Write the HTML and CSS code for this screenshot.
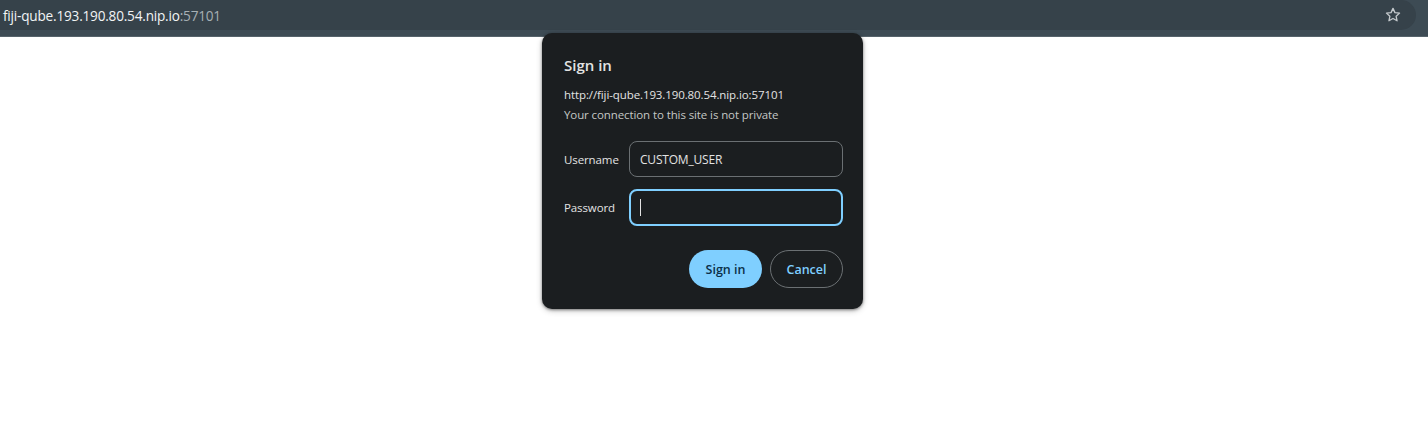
FILE: index.html
```html
<!DOCTYPE html>
<html>
<head>
<meta charset="utf-8">
<link rel="stylesheet" href="styles.css">
</head>
<body>
<div class="toolbar">
  <div class="omnibox">
    <span class="host">fiji-qube.193.190.80.54.nip.io</span><span class="port">:57101</span>
    <svg class="star" width="18" height="18" viewBox="0 0 24 24"><path d="M12 3.2l2.6 5.6 6.1.7-4.5 4.2 1.2 6-5.4-3-5.4 3 1.2-6-4.5-4.2 6.1-.7z" fill="none" stroke="#c4c9cc" stroke-width="1.8" stroke-linejoin="round"/></svg>
  </div>
</div>
<div class="page"></div>
<div class="dialog">
  <div class="title">Sign in</div>
  <div class="info">http://fiji-qube.193.190.80.54.nip.io:57101</div>
  <div class="info sub">Your connection to this site is not private</div>
  <div class="form">
    <div class="row">
      <label>Username</label>
      <div class="field">CUSTOM_USER</div>
    </div>
    <div class="row">
      <label>Password</label>
      <div class="field focus"><span class="caret"></span></div>
    </div>
  </div>
  <div class="actions">
    <button class="btn primary">Sign in</button>
    <button class="btn secondary">Cancel</button>
  </div>
</div>
</body>
</html>
```
FILE: styles.css
```css
* { box-sizing: border-box; }
html, body { margin: 0; padding: 0; background: #ffffff; }
body { font-family: "Open Sans", "Noto Sans", sans-serif; position: relative; height: 440px; overflow: hidden; }
.toolbar {
  height: 37px;
  background: #3d4b54;
  padding-right: 12px;
  border-bottom: 1px solid #56636b;
}
.omnibox {
  height: 30px;
  background: #36424a;
  border-radius: 0 15px 15px 0;
  display: flex;
  align-items: center;
  padding-left: 3px;
  font-size: 13.6px;
  letter-spacing: -0.2px;
}
.host { color: #f2f4f5; }
.port { color: #a7b0b5; }
.star { margin-left: auto; margin-right: 14px; }
.dialog {
  position: absolute;
  left: 542px;
  top: 33px;
  width: 321px;
  height: 276px;
  background: #1b1e20;
  border-radius: 10px;
  box-shadow: 0 1px 3px rgba(0,0,0,0.45), 0 2px 6px rgba(0,0,0,0.2);
  padding: 22px 20px 0 22px;
  color: #e3e3e3;
}
.title { font-size: 15px; font-weight: 600; line-height: 20px; margin-bottom: 10px; }
.info { font-size: 11.5px; line-height: 20px; color: #e3e3e3; letter-spacing: -0.1px; }
.info.sub { color: #c4c7c5; }
.form { margin-top: 16px; display: flex; flex-direction: column; gap: 12px; }
.row { display: flex; align-items: center; }
.row label { width: 65px; font-size: 11.5px; color: #e3e3e3; letter-spacing: -0.1px; }
.field {
  flex: 1;
  height: 36px;
  border: 1px solid #6b7073;
  border-radius: 8px;
  display: flex;
  align-items: center;
  padding-left: 10px;
  font-size: 12px;
  color: #e3e3e3;
  letter-spacing: -0.2px;
}
.field.focus { border: 2px solid #7fcfff; height: 37px; padding-left: 9px; }
.caret { width: 1px; height: 17px; background: #e3e3e3; }
.actions { display: flex; justify-content: flex-end; gap: 8px; margin-top: 24px; }
.btn {
  height: 38px;
  border-radius: 19px;
  font-family: inherit;
  font-size: 12.5px;
  font-weight: 600;
  padding: 0;
}
.primary { width: 73px; background: #7fcfff; color: #0b3049; border: none; }
.secondary { width: 73px; background: transparent; color: #7fcfff; border: 1px solid #6b7073; }
```
